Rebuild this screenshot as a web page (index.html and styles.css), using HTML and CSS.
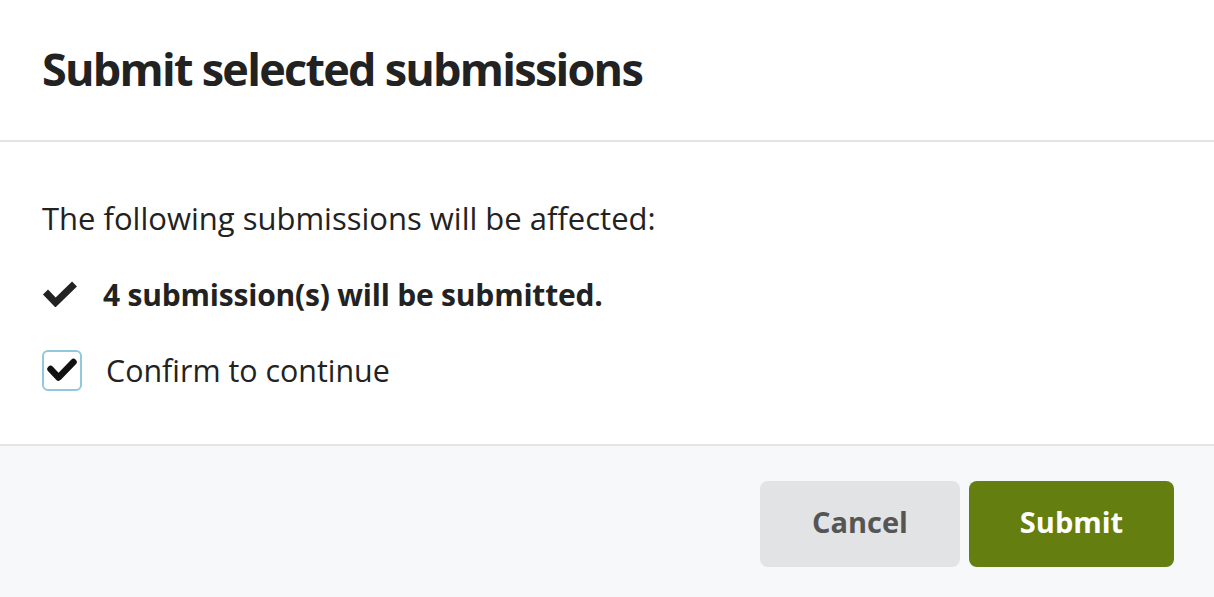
FILE: index.html
```html
<!DOCTYPE html>
<html lang="en">
<head>
<meta charset="utf-8">
<title>Submit selected submissions</title>
<link rel="stylesheet" href="styles.css">
</head>
<body>
<div class="modal">
  <div class="modal-header">
    <h1 class="modal-title">Submit selected submissions</h1>
  </div>
  <div class="modal-body">
    <p class="intro">The following submissions will be affected:</p>
    <div class="result-row">
      <svg class="check-icon" viewBox="0 0 36 26" aria-hidden="true"><polyline points="3.5,11 13.5,21.5 32.5,3" fill="none" stroke="#222" stroke-width="7" stroke-linejoin="miter"/></svg>
      <span class="result-text">4 submission(s) will be submitted.</span>
    </div>
    <label class="confirm-row">
      <span class="checkbox"><svg viewBox="0 0 30 24" aria-hidden="true"><polyline points="3.5,11 11.5,19.5 26.5,4" fill="none" stroke="#111" stroke-width="6.5" stroke-linecap="round" stroke-linejoin="round"/></svg></span>
      <span class="confirm-text">Confirm to continue</span>
    </label>
  </div>
  <div class="modal-footer">
    <button class="btn btn-cancel">Cancel</button>
    <button class="btn btn-submit">Submit</button>
  </div>
</div>
</body>
</html>
```
FILE: styles.css
```css
html, body {
  margin: 0;
  padding: 0;
  background: #ffffff;
}
body {
  font-family: "Open Sans", "Noto Sans", sans-serif;
  color: #222222;
}
.modal {
  width: 1214px;
  height: 597px;
  display: flex;
  flex-direction: column;
}
.modal-header {
  padding: 0 42px 4px;
  display: flex;
  align-items: center;
  border-bottom: 2px solid #e4e4e4;
  box-sizing: border-box;
  height: 142px;
}
.modal-title {
  margin: 0;
  font-size: 45px;
  font-weight: 700;
  letter-spacing: -1.75px;
  color: #222;
}
.modal-body {
  padding: 0 42px;
  box-sizing: border-box;
  border-bottom: 2px solid #e4e4e4;
  height: 304px;
}
.intro {
  margin: 0;
  padding-top: 56px;
  font-size: 31px;
  line-height: 40px;
}
.result-row {
  display: flex;
  align-items: center;
  margin-top: 36px;
  height: 40px;
}
.check-icon {
  width: 36px;
  height: 26px;
  margin-right: 25px;
}
.result-text {
  font-size: 30px;
  font-weight: 700;
  letter-spacing: -0.2px;
}
.confirm-row {
  display: flex;
  align-items: center;
  margin-top: 35px;
  height: 42px;
}
.checkbox {
  width: 40px;
  height: 41px;
  box-sizing: border-box;
  border: 2px solid #90c8dd;
  border-radius: 6px;
  display: flex;
  align-items: center;
  justify-content: center;
  margin-right: 24px;
}
.checkbox svg {
  width: 30px;
  height: 24px;
}
.confirm-text {
  font-size: 30.4px;
}
.modal-footer {
  flex: 1;
  background: #f7f8fa;
  display: flex;
  justify-content: flex-end;
  align-items: flex-start;
  padding: 35px 40px 0 0;
  gap: 9px;
}
.btn {
  height: 86px;
  padding: 0 0 5px;
  border: none;
  border-radius: 8px;
  font-family: "Open Sans", "Noto Sans", sans-serif;
  font-size: 29px;
  font-weight: 700;
  cursor: pointer;
}
.btn-cancel {
  width: 200px;
  background: #e2e3e5;
  color: #555555;
}
.btn-submit {
  width: 205px;
  background: #647f10;
  color: #ffffff;
}
```
